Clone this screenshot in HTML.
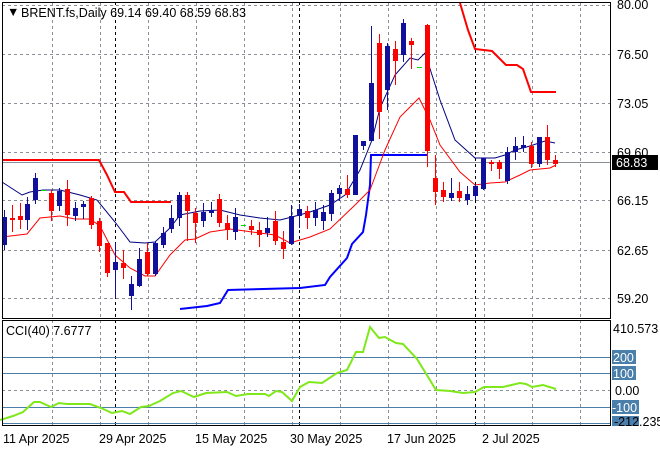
<!DOCTYPE html>
<html><head><meta charset="utf-8"><style>
html,body{margin:0;padding:0;background:#fff;width:660px;height:450px;overflow:hidden}
svg{display:block}
text{font-family:"Liberation Sans",sans-serif;font-size:12.5px}
</style></head><body>
<svg id="s" width="660" height="450" xmlns="http://www.w3.org/2000/svg">
<rect x="0" y="0" width="660" height="450" fill="#fff"/>
<g id="grid" stroke="#8a8f98" stroke-dasharray="3,3" stroke-width="1"></g>
<g id="vl" stroke="#000" stroke-dasharray="3,3" stroke-width="1"></g>
<line x1="2" y1="162.5" x2="610" y2="162.5" stroke="#8a8f98"/>
<polyline fill="none" stroke="#ff0000" stroke-width="2" points="2,160 99,160 107,175 115,192 124,192 131,202 171,202"/>
<polyline fill="none" stroke="#ff0000" stroke-width="2" points="460,3 468,30 475,49 492,51 506,65 517,65 523,69 531,92 556,92"/>
<polyline fill="none" stroke="#0000ff" stroke-width="2" points="180,309 207,306 220,303 228,290 300,288 325,285 330,277 347,258 352,244 363,232 366,215 370,185 371,155 427,155"/>
<polyline fill="none" stroke="#000080" stroke-width="1" points="2,182 22,195 30,192 43,190 60,190 80,195 97,200 115,222 130,242 145,243 155,242 170,228 180,215 200,211 220,210 240,215 260,218 280,220 292,217 310,212 330,205 345,195 360,170 372,140 380,108 395,75 410,58 418,60 425,53 440,100 455,140 475,158 495,158 505,155 515,150 530,146 545,141 555,143"/>
<polyline fill="none" stroke="#ff0000" stroke-width="1" points="2,237 27,234 40,218 60,216 75,219 90,219 100,226 115,255 130,268 145,276 155,276 170,255 185,240 195,239 210,232 230,229 245,231 260,233 275,235 290,243 310,237 330,229 355,205 370,190 385,150 400,117 419,98 430,120 440,145 460,172 475,185 490,183 505,182 520,175 530,170 550,168 556,165"/>
<g id="c"></g>
<rect x="2.5" y="2.5" width="608" height="316" fill="none" stroke="#000"/>
<text x="7" y="16" font-size="9">▼</text>
<text x="21" y="17" fill="#000" textLength="225" lengthAdjust="spacingAndGlyphs">BRENT.fs,Daily  69.14 69.40 68.59 68.83</text>
<g fill="#000">
<text x="617" y="9">80.00</text>
<text x="617" y="59">76.50</text>
<text x="617" y="108">73.05</text>
<text x="617" y="157">69.60</text>
<text x="617" y="205">66.15</text>
<text x="617" y="255">62.65</text>
<text x="617" y="303">59.20</text>
</g>
<rect x="612" y="155" width="46" height="15" fill="#000"/>
<text x="616" y="167" fill="#fff">68.83</text>
<g stroke="#4a7eab" stroke-width="1">
<line x1="2" y1="357.5" x2="610" y2="357.5"/>
<line x1="2" y1="373.5" x2="610" y2="373.5"/>
<line x1="2" y1="407.5" x2="610" y2="407.5"/>
<line x1="2" y1="423.5" x2="610" y2="423.5"/>
</g>
<line x1="2" y1="390.5" x2="610" y2="390.5" stroke="#8a8f98" stroke-dasharray="3,3"/>
<polyline fill="none" stroke="#7fe81a" stroke-width="2" points="0,420 13,416 23,412 34,402 40,402 51,407 59,403 67,404 90,404 101,408 112,413 122,411 130,414 141,407 149,406 160,401 173,393 181,391 194,397 206,393 227,392 236,396 248,394 265,394 269,396 276,391 282,392 292,401 300,387 309,382 322,383 337,373 347,370 356,352 363,352 370,327 379,338 385,337 396,343 403,344 417,359 425,372 436,390 450,391 463,393 475,392 484,387 490,387 503,387 520,383 526,384 532,387 543,385 556,389"/>
<rect x="2.5" y="320.5" width="608" height="105" fill="none" stroke="#000"/>
<text x="6" y="335" fill="#000">CCI(40) 7.6777</text>
<text x="613" y="333" fill="#000">410.573</text>
<rect x="612" y="350" width="24" height="14" fill="#4a7eab"/><text x="613" y="362" fill="#fff">200</text>
<rect x="612" y="366" width="24" height="14" fill="#4a7eab"/><text x="613" y="378" fill="#fff">100</text>
<text x="615" y="395" fill="#000">0.00</text>
<rect x="612" y="400" width="27" height="14" fill="#4a7eab"/><text x="612" y="412" fill="#fff">-100</text>
<rect x="612" y="416" width="27" height="10" fill="#4a7eab"/>
<text x="614" y="426" fill="#000">-212.235</text>
<g fill="#000">
<text x="3" y="443">11 Apr 2025</text>
<text x="99" y="443">29 Apr 2025</text>
<text x="195" y="443">15 May 2025</text>
<text x="290" y="443">30 May 2025</text>
<text x="387" y="443">17 Jun 2025</text>
<text x="482" y="443">2 Jul 2025</text>
</g>
</svg>
<script>
var NS="http://www.w3.org/2000/svg";
function el(p,t,a){var e=document.createElementNS(NS,t);for(var k in a)e.setAttribute(k,a[k]);p.appendChild(e);return e;}
var g=document.getElementById('grid'),v=document.getElementById('vl');
[5,54,103,152,200,250,298].forEach(function(y){el(g,'line',{x1:2,x2:610,y1:y+.5,y2:y+.5});});
for(var x=52;x<610;x+=48){el(g,'line',{x1:x+.5,x2:x+.5,y1:2,y2:318});el(g,'line',{x1:x+.5,x2:x+.5,y1:320,y2:426});}
[115,299,475].forEach(function(x){el(v,'line',{x1:x+.5,x2:x+.5,y1:2,y2:318});el(v,'line',{x1:x+.5,x2:x+.5,y1:320,y2:426});});
var B='#10109c',R='#ff0000',G='#00e000';
var d=[
[4,B,217,245,210,250],[12,R,218,220,205,232],[20,R,216,220,203,229],[27,B,204,220,197,230],[35,B,178,200,173,204],[43,G,190,191,190,191],
[51,R,193,211,190,221],[59,B,191,206,188,211],[67,R,189,215,180,226],[75,B,208,216,202,221],[83,B,204,207,201,219],[91,R,198,225,196,229],
[99,R,221,246,218,252],[107,R,243,273,243,277],[115,B,262,270,243,298],[123,R,263,268,250,279],[131,B,284,296,276,310],[139,B,259,286,248,287],
[147,R,252,274,243,276],[155,B,243,274,241,276],[163,B,233,245,227,248],[171,B,218,229,205,233],[179,B,195,218,192,226],[187,R,195,211,192,241],
[195,R,213,223,208,243],[203,B,212,221,203,227],[211,B,210,213,202,217],[219,R,199,223,194,227],[227,R,223,230,215,240],[235,B,217,232,208,240],
[243,G,225,226,225,226],[251,R,226,230,220,235],[259,R,230,235,222,247],[267,B,228,233,217,237],[275,R,221,241,211,245],[283,R,242,249,231,259],
[291,B,216,244,205,245],[299,B,209,216,204,228],[307,R,211,218,206,229],[315,B,210,218,202,226],[323,B,212,221,205,230],[331,B,193,214,190,221],
[339,B,188,194,185,201],[347,R,189,195,175,198],[355,B,135,195,135,195],[363,B,141,146,141,150],[371,B,83,141,26,141],[379,R,43,112,34,139],
[387,B,46,90,43,110],[395,R,49,61,41,85],[403,B,23,55,19,62],[411,R,41,45,38,69],[419,G,67,68,67,68],[427,R,25,151,24,167],
[435,R,178,192,155,205],[443,R,190,197,182,202],[451,B,193,198,178,201],[459,R,191,198,182,202],[467,B,194,200,186,205],[475,B,186,196,184,200],
[483,B,158,189,158,190],[491,R,162,164,160,171],[499,R,162,169,160,179],[507,B,152,181,147,184],[515,B,146,152,137,160],[523,B,145,148,136,152],
[531,R,146,164,142,168],[539,B,137,164,137,167],[547,R,137,160,125,165],[555,R,160,164,155,167]];
var c=document.getElementById('c');
d.forEach(function(a){el(c,'rect',{x:a[0],y:a[4],width:1,height:a[5]-a[4],fill:a[1]});
el(c,'rect',{x:a[0]-2,y:a[2],width:5,height:Math.max(1,a[3]-a[2]),fill:a[1]});});
</script>
</body></html>
